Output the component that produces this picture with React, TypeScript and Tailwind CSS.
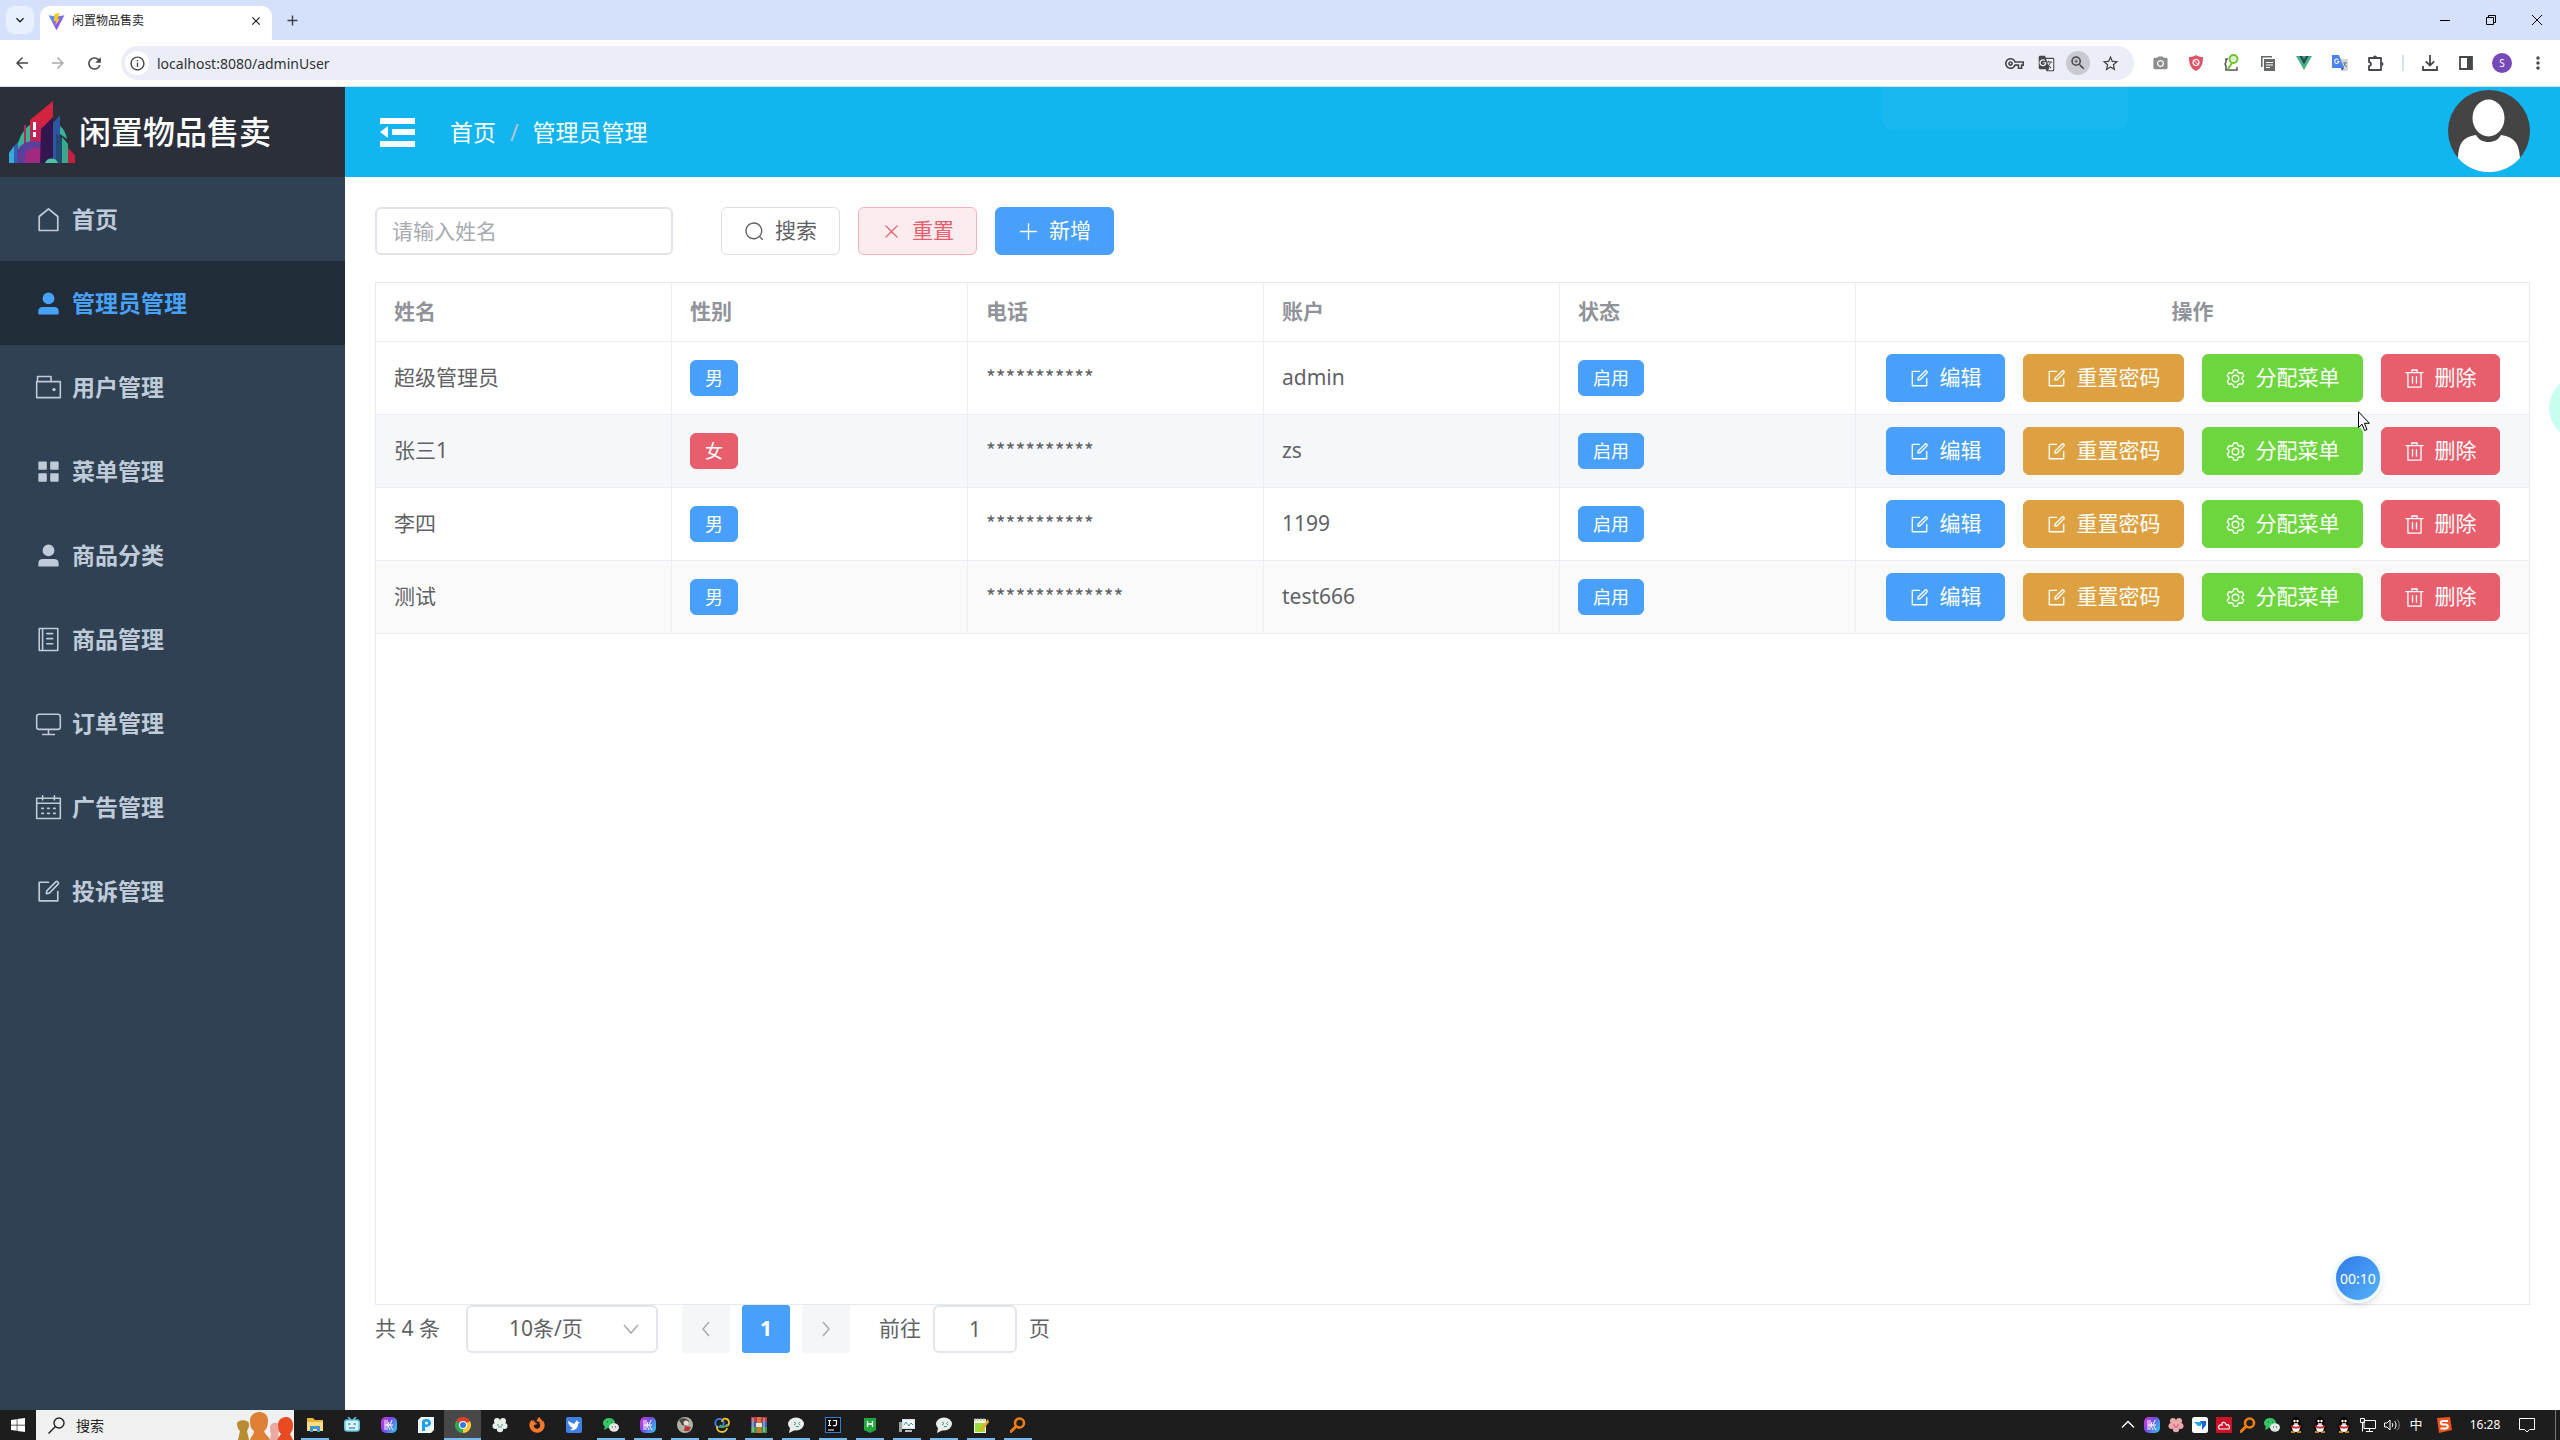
import React from "react";
import {
  MdArrowBack, MdArrowForward, MdRefresh, MdInfoOutline, MdGTranslate, MdZoomIn, MdStarBorder,
  MdPhotoCamera, MdMoreVert, MdClose, MdAdd, MdKeyboardArrowDown, MdOutlineVpnKey,
} from "react-icons/md";
import { FaFirefoxBrowser, FaWindows } from "react-icons/fa";

const P = {
  search: "m795.904 750.72 124.992 124.928a32 32 0 0 1-45.248 45.248L750.656 795.904a416 416 0 1 1 45.248-45.248zM480 832a352 352 0 1 0 0-704 352 352 0 0 0 0 704",
  close: "M764.288 214.592 512 466.88 259.712 214.592a31.936 31.936 0 0 0-45.12 45.12L466.752 512 214.528 764.224a31.936 31.936 0 1 0 45.12 45.184L512 557.184l252.288 252.288a31.936 31.936 0 0 0 45.12-45.12L557.12 512.064l252.288-252.352a31.936 31.936 0 1 0-45.12-45.184z",
  plus: "M480 480V128a32 32 0 0 1 64 0v352h352a32 32 0 1 1 0 64H544v352a32 32 0 1 1-64 0V544H128a32 32 0 0 1 0-64z",
  edit: "M832 512a32 32 0 1 1 64 0v352a32 32 0 0 1-32 32H160a32 32 0 0 1-32-32V160a32 32 0 0 1 32-32h352a32 32 0 0 1 0 64H192v640h640zm-362.048 42.24 52.8-7.552L847.104 222.4a32 32 0 1 0-45.248-45.248L477.44 501.44l-7.552 52.8zm422.4-422.4a96 96 0 0 1 0 135.808l-331.84 331.84a32 32 0 0 1-18.112 9.088L436.8 623.68a32 32 0 0 1-36.224-36.224l15.104-105.6a32 32 0 0 1 9.024-18.112l331.904-331.84a96 96 0 0 1 135.744 0z",
  trash: "M160 256H96a32 32 0 0 1 0-64h256V95.936a32 32 0 0 1 32-32h256a32 32 0 0 1 32 32V192h256a32 32 0 1 1 0 64h-64v672a32 32 0 0 1-32 32H192a32 32 0 0 1-32-32zm448-64v-64H416v64zM224 896h576V256H224zm192-128a32 32 0 0 1-32-32V416a32 32 0 0 1 64 0v320a32 32 0 0 1-32 32m192 0a32 32 0 0 1-32-32V416a32 32 0 0 1 64 0v320a32 32 0 0 1-32 32",
  user: "M288 320a224 224 0 1 0 448 0 224 224 0 1 0-448 0m544 608H160a32 32 0 0 1-32-32v-96a160 160 0 0 1 160-160h448a160 160 0 0 1 160 160v96a32 32 0 0 1-32 32z",
  house: "M192 413.952V896h640V413.952L512 147.328zM139.52 374.4l352-293.312a32 32 0 0 1 40.96 0l352 293.312A32 32 0 0 1 896 398.976V928a32 32 0 0 1-32 32H160a32 32 0 0 1-32-32V398.976a32 32 0 0 1 11.52-24.576",
  menu: "M160 448a32 32 0 0 1-32-32V160a32 32 0 0 1 32-32h256a32 32 0 0 1 32 32v256a32 32 0 0 1-32 32zm448 0a32 32 0 0 1-32-32V160a32 32 0 0 1 32-32h256a32 32 0 0 1 32 32v256a32 32 0 0 1-32 32zM160 896a32 32 0 0 1-32-32V608a32 32 0 0 1 32-32h256a32 32 0 0 1 32 32v256a32 32 0 0 1-32 32zm448 0a32 32 0 0 1-32-32V608a32 32 0 0 1 32-32h256a32 32 0 0 1 32 32v256a32 32 0 0 1-32 32z",
  setting: "M600.704 64a32 32 0 0 1 30.464 22.208l35.2 109.376c14.784 7.232 28.928 15.36 42.432 24.512l112.384-24.192a32 32 0 0 1 34.432 15.36L944.32 364.8a32 32 0 0 1-4.032 37.504l-77.12 85.12a357.12 357.12 0 0 1 0 49.024l77.12 85.248a32 32 0 0 1 4.032 37.504l-88.704 153.6a32 32 0 0 1-34.432 15.296L708.8 803.904c-13.44 9.088-27.648 17.28-42.368 24.512l-35.264 109.376A32 32 0 0 1 600.704 960H423.296a32 32 0 0 1-30.464-22.208L357.696 828.48a351.616 351.616 0 0 1-42.56-24.64l-112.32 24.256a32 32 0 0 1-34.432-15.36L79.68 659.2a32 32 0 0 1 4.032-37.504l77.12-85.248a357.12 357.12 0 0 1 0-48.896l-77.12-85.248A32 32 0 0 1 79.68 364.8l88.704-153.6a32 32 0 0 1 34.432-15.296l112.32 24.256c13.568-9.152 27.776-17.408 42.56-24.64l35.2-109.312A32 32 0 0 1 423.232 64H600.64zm-23.424 64H446.72l-36.352 113.088-24.512 11.968a294.113 294.113 0 0 0-34.816 20.096l-22.656 15.36-116.224-25.088-65.28 113.152 79.68 88.192-1.92 27.136a293.12 293.12 0 0 0 0 40.192l1.92 27.136-79.808 88.192 65.344 113.152 116.224-25.024 22.656 15.296a294.113 294.113 0 0 0 34.816 20.096l24.512 11.968L446.72 896h130.688l36.48-113.152 24.448-11.904a288.282 288.282 0 0 0 34.752-20.096l22.592-15.296 116.288 25.024 65.28-113.152-79.744-88.192 1.92-27.136a293.12 293.12 0 0 0 0-40.256l-1.92-27.136 79.808-88.128-65.344-113.152-116.288 24.96-22.592-15.232a287.616 287.616 0 0 0-34.752-20.096l-24.448-11.904L577.344 128zM512 320a192 192 0 1 1 0 384 192 192 0 0 1 0-384m0 64a128 128 0 1 0 0 256 128 128 0 0 0 0-256",
};

const LINES = {
  wallet: "M96 288V96h512v160M64 288h896v608H64zM704 592h32",
  notebook: "M160 96h704v832H160zM288 96v832M448 288h224M448 480h224M448 672h224",
  monitor: "M160 160h704a96 96 0 0 1 96 96v384a96 96 0 0 1-96 96H160a96 96 0 0 1-96-96V256a96 96 0 0 1 96-96zM512 736v192M288 928h448",
  calendar: "M64 160h896v768H64zM64 352h896M288 64v160M736 64v160M256 544h64M480 544h64M704 544h64M256 736h64M480 736h64M704 736h64",
};

function Icon({ name, className = "size-[21px]" }: { name: string; className?: string }) {
  const filled = (P as Record<string, string>)[name];
  const line = (LINES as Record<string, string>)[name];
  return (
    <svg viewBox="0 0 1024 1024" className={className + " shrink-0"} aria-hidden="true">
      {filled ? (
        <path d={filled} fill="currentColor" />
      ) : (
        <path d={line} fill="none" stroke="currentColor" strokeWidth="60" strokeLinecap="round" strokeLinejoin="round" />
      )}
      {name === "wallet" && <circle cx="720" cy="592" r="64" fill="currentColor" />}
    </svg>
  );
}

/* ---------- browser chrome ---------- */

const ViteLogo = () => (
  <svg viewBox="0 0 32 32" className="size-[17px]" aria-hidden="true">
    <defs>
      <linearGradient id="vp" x1="0" y1="0" x2="1" y2="1">
        <stop offset="0" stopColor="#41a6ff" />
        <stop offset="1" stopColor="#b92de0" />
      </linearGradient>
    </defs>
    <path d="M31 4 17 30.500a1 1 0 0 1-2 0L1 4l15 2.500z" fill="url(#vp)" />
    <path d="M22 0 12 2l-1 13h4l-1 8 8-12h-4z" fill="#ffc81f" />
  </svg>
);

function Cell({ children, label, w = "w-9" }: { children: React.ReactNode; label: string; w?: string }) {
  return (
    <button type="button" aria-label={label} className={"flex h-8 shrink-0 items-center justify-center " + w}>
      {children}
    </button>
  );
}

function TabStrip() {
  return (
    <div className="flex h-10 items-end bg-[#d5e1fb]">
      <button type="button" aria-label="tabs" className="mb-1.5 ml-1.5 flex size-7 items-center justify-center rounded-[9px] bg-[#e9f0fd] text-[#1f1f1f]">
        <MdKeyboardArrowDown size={16} />
      </button>
      <div className="ml-1.5 flex h-[34px] w-[232px] items-center rounded-t-[10px] bg-white pr-2 pb-1 pl-2">
        <ViteLogo />
        <span className="ml-[7px] flex-1 text-[12px] text-[#1f1f1f]">闲置物品售卖</span>
        <button type="button" aria-label="close tab" className="flex size-4 items-center justify-center text-[#1f1f1f]">
          <MdClose size={14} />
        </button>
      </div>
      <button type="button" aria-label="new tab" className="mb-2.5 ml-2.5 flex size-5 items-center justify-center text-[#3c4043]">
        <MdAdd size={17} />
      </button>
      <div className="ml-auto flex h-10 items-center text-black">
        <button type="button" aria-label="minimize" className="flex h-10 w-[46px] items-center justify-center">
          <svg viewBox="0 0 12 12" className="size-3"><path d="M1 6.500h10" stroke="currentColor" /></svg>
        </button>
        <button type="button" aria-label="restore" className="flex h-10 w-[46px] items-center justify-center">
          <svg viewBox="0 0 12 12" className="size-3" fill="none"><path d="M1.500 3.500h7v7h-7zM3.500 3.500v-2h7v7h-2" stroke="currentColor" /></svg>
        </button>
        <button type="button" aria-label="close" className="flex h-10 w-[46px] items-center justify-center">
          <svg viewBox="0 0 12 12" className="size-3"><path d="m1 1 10 10M11 1 1 11" stroke="currentColor" /></svg>
        </button>
      </div>
    </div>
  );
}

function AddressBar() {
  return (
    <div className="flex h-[47px] items-center border-b border-[#d3e0ea] bg-white pr-1 pl-1 text-[#46484b]">
      <Cell label="back"><MdArrowBack size={18} /></Cell>
      <Cell label="forward"><MdArrowForward size={18} className="text-[#a9abae]" /></Cell>
      <Cell label="reload"><MdRefresh size={19} /></Cell>
      <div className="mr-2 ml-[9px] flex h-[34px] flex-1 items-center rounded-full bg-[#ebeef7] pr-2 pl-1">
        <span className="flex size-6 items-center justify-center rounded-full bg-white"><MdInfoOutline size={17} /></span>
        <input aria-label="address" defaultValue="localhost:8080/adminUser" className="ml-2 min-w-0 flex-1 bg-transparent text-[14px] text-[#303236] outline-none" />
        <Cell label="password" w="w-8"><MdOutlineVpnKey size={19} /></Cell>
        <Cell label="translate" w="w-8"><MdGTranslate size={17} /></Cell>
        <Cell label="zoom" w="w-8">
          <span className="flex size-6 items-center justify-center rounded-full bg-[#c7cad1]"><MdZoomIn size={18} /></span>
        </Cell>
        <Cell label="bookmark" w="w-8"><MdStarBorder size={19} /></Cell>
      </div>
      <Cell label="screenshot"><MdPhotoCamera size={17} className="text-[#8b8d90]" /></Cell>
      <Cell label="shield">
        <svg viewBox="0 0 16 16" className="size-4">
          <path d="M8 0c2 1.500 4.500 2 7 2 0 6-1 11-7 14C2 13 1 8 1 2c2.500 0 5-.5 7-2" fill="#dc5467" />
          <circle cx="8" cy="7.500" r="3" fill="none" stroke="#fff" strokeWidth="1.200" /><path d="m6 5.500 4 4" stroke="#fff" />
        </svg>
      </Cell>
      <Cell label="inspector">
        <svg viewBox="0 0 16 18" className="h-[18px] w-4" fill="none">
          <path d="M4 5H2v3L1 10l1 2v4h11v-3" stroke="#555" strokeWidth="1.500" />
          <circle cx="9.500" cy="5" r="4" fill="#dcf3cc" stroke="#6fc32f" strokeWidth="1.800" /><path d="m8 9-4 6" stroke="#6fc32f" strokeWidth="2" />
        </svg>
      </Cell>
      <Cell label="copy">
        <svg viewBox="0 0 16 16" className="size-4" fill="none">
          <path d="M1.800 12V1.800H12" stroke="#66686b" strokeWidth="1.600" />
          <path d="M4 4h11v12H4z" fill="#66686b" />
          <path d="M6 7.500h7M6 10h7M6 12.500h4" stroke="#fff" strokeWidth="1.200" />
        </svg>
      </Cell>
      <Cell label="vue">
        <svg viewBox="0 0 16 14" className="h-3.5 w-4"><path d="M0 0h16L8 14z" fill="#41b883" /><path d="M3.200 0h3L8 3l1.800-3h3L8 8.400z" fill="#34495e" /></svg>
      </Cell>
      <Cell label="google translate">
        <svg viewBox="0 0 16 16" className="size-4">
          <path d="M7 4h9v12h-5z" fill="#d5d7da" /><path d="M0 0h7l5 13H0z" fill="#4a83ee" /><path d="M9 13h3l-2 3z" fill="#2a56c0" />
          <path d="M6.500 4.800A2.200 2.200 0 1 0 7 6.500H5" fill="none" stroke="#fff" strokeWidth="1.100" /><path d="M11 8h4M13 7v1c0 2-1 3-2 4M12 9l3 3" fill="none" stroke="#63686e" strokeWidth=".8" />
        </svg>
      </Cell>
      <Cell label="extensions">
        <svg viewBox="0 0 18 18" className="size-[18px]" fill="none" stroke="currentColor" strokeWidth="1.800" strokeLinejoin="round">
          <path d="M2 4h12v12H2v-4a2 2 0 0 0 0-4z" /><path d="M6 3.500a2 2 0 0 1 4 0zM14.500 8a2 2 0 0 1 0 4z" fill="currentColor" stroke="none" />
        </svg>
      </Cell>
      <span className="mx-2 h-4 w-0.5 bg-[#d3e1fb]" />
      <Cell label="downloads">
        <svg viewBox="0 0 16 16" className="size-4" fill="none" stroke="currentColor" strokeWidth="1.800"><path d="M8 0v10M3.800 6.300 8 10.500l4.200-4.200M1 11v4h14v-4" /></svg>
      </Cell>
      <Cell label="side panel">
        <svg viewBox="0 0 16 16" className="size-4"><path d="M2 2h12v12H2z" fill="none" stroke="currentColor" strokeWidth="1.800" /><path d="M9 2h5v12H9z" fill="currentColor" /></svg>
      </Cell>
      <Cell label="profile"><span className="flex size-5 items-center justify-center rounded-full bg-[#7549b8] text-[10px] text-white">S</span></Cell>
      <Cell label="more"><MdMoreVert size={20} /></Cell>
    </div>
  );
}

/* ---------- application ---------- */

const CityLogo = () => (
  <svg viewBox="0 0 67 64" className="h-16 w-[67px] shrink-0" aria-hidden="true">
    <path d="M1 53 6 46v17H1z" fill="#3aa9dc" /><path d="m6 46 6-6v23H6z" fill="#2d62b4" />
    <path d="M10 44c2-9 7-16 13-20v39H10z" fill="#37b597" />
    <path d="M16 25h2v38h-2z" fill="#b5285c" />
    <path d="M22 20 45 1v32L22 50z" fill="#d4233f" /><path d="M22 30 34 20v30H22z" fill="#c52356" />
    <path d="M9 63V51c4-8 14-13 25-8v20z" fill="#5c3f9b" />
    <path d="M17 63v-8c3-6 9-8 17-7v15z" fill="#a12a80" />
    <path d="m33 29 12-12v46H32z" fill="#33154f" />
    <path d="m45 23 7-8v48h-7z" fill="#2d56a4" />
    <path d="M52 26c4 3 6 8 7 13l-7-5z" fill="#37b597" />
    <path d="m48 33 12 11v19H48z" fill="#214a70" /><path d="m54 37 6 7v19h-6z" fill="#38a98e" />
    <path d="m60 48 7 7v8h-7z" fill="#c11f45" />
    <path d="M37 63a7 7 0 0 1 13 0z" fill="#48c4a0" />
    <path d="M25 22h3v8h-3zM25 32h3v5h-3z" fill="#fff" />
  </svg>
);

const MENU = [
  ["house", "首页"], ["user", "管理员管理"], ["wallet", "用户管理"], ["menu", "菜单管理"], ["user", "商品分类"],
  ["notebook", "商品管理"], ["monitor", "订单管理"], ["calendar", "广告管理"], ["edit", "投诉管理"],
];

function Sidebar() {
  return (
    <aside className="w-[345px] shrink-0 bg-[#304153]">
      <div className="flex h-[90px] items-center bg-[#2b2f3a] pl-2">
        <CityLogo />
        <span className="ml-1 text-[32px] font-medium text-white">闲置物品售卖</span>
      </div>
      <nav>
        {MENU.map(([icon, label], i) => (
          <a
            key={label}
            href={"#" + i}
            className={"flex h-[84px] items-center gap-[10px] pl-[35px] text-[23px] font-bold " + (i === 1 ? "bg-[#212d39] text-[#48a2fc]" : "text-[#bfcbd9]")}
          >
            <Icon name={icon} className="size-[27px]" />
            {label}
          </a>
        ))}
      </nav>
    </aside>
  );
}

function TopBar() {
  return (
    <header className="relative flex h-[90px] items-center bg-[#11b5f0] pr-[30px] pl-[35px] text-[23px] text-white">
      <button type="button" aria-label="collapse menu">
        <svg viewBox="0 0 35 29" className="h-[29px] w-[35px]" fill="currentColor"><path d="M0 0h35v6H0zM12 11h23v6H12zM0 23h35v6H0zM0 14l8-6v12z" /></svg>
      </button>
      <nav className="ml-[35px] flex gap-[14px]">
        <a href="#home">首页</a>
        <span className="text-[#b9c2cc]">/</span>
        <span>管理员管理</span>
      </nav>
      <div className="absolute top-0 right-[432px] h-[43px] w-[246px] rounded-b-xl bg-[#19b8f1]" />
      <svg viewBox="0 0 82 82" className="mb-0.5 ml-auto size-[82px]" role="img" aria-label="avatar">
        <circle cx="41" cy="41" r="41" fill="#444" />
        <ellipse cx="40.500" cy="28" rx="16" ry="18.500" fill="#fff" />
        <path d="M10 68c1-14 4-21 18-23 3 5 7 7 12.500 7S50 50 53 45c14 2 18 9 19 23a41 41 0 0 1-62 0" fill="#fff" />
      </svg>
    </header>
  );
}

const BTN = "flex h-12 items-center justify-center gap-[10px] rounded-md border px-[22px] ";
const TONE: Record<string, string> = {
  plain: "border-[#dcdfe6] bg-white text-[#606266]",
  dangerPlain: "border-[#f3b3ba] bg-[#fcecee] text-[#e75f6f]",
  primary: "border-[#48a0fa] bg-[#48a0fa] text-white",
  warning: "border-[#dea141] bg-[#dea141] text-white",
  success: "border-[#6dd63e] bg-[#6dd63e] text-white",
  danger: "border-[#e85e6c] bg-[#e85e6c] text-white",
};

function Btn({ icon, tone, children }: { icon: string; tone: string; children: React.ReactNode }) {
  return (
    <button type="button" className={BTN + TONE[tone]}>
      <Icon name={icon} />
      <span>{children}</span>
    </button>
  );
}

const Tag = ({ tone, children }: { tone: string; children: React.ReactNode }) => (
  <span className={"inline-flex h-9 items-center rounded-md border px-[14px] align-middle text-[18px] " + TONE[tone]}>{children}</span>
);

const ROWS = [
  { name: "超级管理员", sex: "男", phone: "***********", account: "admin", bg: "bg-white" },
  { name: "张三1", sex: "女", phone: "***********", account: "zs", bg: "bg-[#f5f7fa]" },
  { name: "李四", sex: "男", phone: "***********", account: "1199", bg: "bg-white" },
  { name: "测试", sex: "男", phone: "**************", account: "test666", bg: "bg-[#fafafa]" },
];

function UserTable() {
  const cell = "border-b border-[#ebeef5] px-[18px] ";
  return (
    <div className="mt-[27px] flex-1 border border-[#e6e9f0]">
      <table className="w-full table-fixed border-separate border-spacing-0">
        <thead>
          <tr className="text-left text-[#909399]">
            {["姓名", "性别", "电话", "账户", "状态"].map((h) => (
              <th key={h} className={cell + "h-[59px] border-r font-bold"}>{h}</th>
            ))}
            <th className={cell + "h-[59px] w-[673px] text-center font-bold"}>操作</th>
          </tr>
        </thead>
        <tbody>
          {ROWS.map((r) => (
            <tr key={r.name} className={r.bg}>
              <td className={cell + "h-[73px] border-r"}>{r.name}</td>
              <td className={cell + "border-r"}><Tag tone={r.sex === "男" ? "primary" : "danger"}>{r.sex}</Tag></td>
              <td className={cell + "border-r font-['Noto_Sans_CJK_SC',sans-serif]"}>{r.phone}</td>
              <td className={cell + "border-r"}>{r.account}</td>
              <td className={cell + "border-r"}><Tag tone="primary">启用</Tag></td>
              <td className={cell}>
                <div className="flex justify-center gap-[18px]">
                  <Btn icon="edit" tone="primary">编辑</Btn>
                  <Btn icon="edit" tone="warning">重置密码</Btn>
                  <Btn icon="setting" tone="success">分配菜单</Btn>
                  <Btn icon="trash" tone="danger">删除</Btn>
                </div>
              </td>
            </tr>
          ))}
        </tbody>
      </table>
    </div>
  );
}

const Chevron = ({ d }: { d: string }) => (
  <svg viewBox="0 0 18 18" className="size-[18px]" fill="none" stroke="#a8abb2" strokeWidth="1.500"><path d={d} /></svg>
);

function Pagination() {
  return (
    <div className="flex h-12 items-center">
      <span>共 4 条</span>
      <div className="relative ml-[26px] h-12 w-[192px]">
        <select aria-label="page size" className="size-full appearance-none rounded-md border-2 border-[#e2e5eb] bg-white pr-8 text-center [text-align-last:center]">
          <option>10条/页</option>
        </select>
        <span className="pointer-events-none absolute top-[15px] right-[18px]"><Chevron d="m2 5 7 8 7-8" /></span>
      </div>
      <div className="ml-6 flex gap-3">
        <button type="button" aria-label="previous page" className="flex size-12 items-center justify-center rounded-[3px] bg-[#f4f6f8]"><Chevron d="m12 2-6 7 6 7" /></button>
        <button type="button" className="size-12 rounded-[3px] bg-[#48a0fa] font-bold text-white">1</button>
        <button type="button" aria-label="next page" className="flex size-12 items-center justify-center rounded-[3px] bg-[#f4f6f8]"><Chevron d="m6 2 6 7-6 7" /></button>
      </div>
      <label htmlFor="jump" className="ml-[29px]">前往</label>
      <input id="jump" defaultValue="1" className="mx-3 h-12 w-[84px] rounded-md border-2 border-[#e2e5eb] text-center outline-none" />
      <span>页</span>
    </div>
  );
}

/* ---------- taskbar ---------- */

const Glyph = ({ children }: { children: React.ReactNode }) => <svg viewBox="0 0 16 16" className="size-4" aria-hidden="true">{children}</svg>;

const Koala = () => (
  <Glyph>
    <defs><linearGradient id="kg" x1="0" y1="0" x2="1" y2="0.600"><stop offset="0" stopColor="#e035d8" /><stop offset=".5" stopColor="#7a48e8" /><stop offset="1" stopColor="#35b4f0" /></linearGradient></defs>
    <rect width="16" height="16" rx="5" fill="url(#kg)" />
    <path d="M4 3v10M6 3v10M8 5l-1 3 2 5M11 3 9 8l3 5M4 8h8" stroke="#fff" fill="none" />
  </Glyph>
);
const Folder = () => (
  <Glyph><path d="M0 1h6l2 2h8v11H0z" fill="#e9b63c" /><path d="M0 5h16v9H0z" fill="#fbdc82" /><path d="M3 15V9h10v6h-3v-3H6v3z" fill="#3c97d4" /></Glyph>
);
const Bili = () => (
  <Glyph><path d="m4 0 3 3M12 0 9 3" stroke="#5cc3e0" strokeWidth="1.500" /><rect x=".8" y="3" width="14.400" height="11" rx="2.500" fill="#d9f5fb" stroke="#5cc3e0" strokeWidth="1.600" /><path d="M4 7h2.500M9.500 7H12M5 11h6" stroke="#4699b8" strokeWidth="1.400" /></Glyph>
);
const PApp = () => (
  <Glyph><path d="M3 0h13v13l-3 3H0V3z" fill="#eef7fc" /><path d="M4 14V5c0-4 9-4 9 1 0 4-5 4-6 4v4z" fill="#1ea0e6" /><circle cx="8.500" cy="6" r="1.500" fill="#fff" /></Glyph>
);
const Chrome = () => (
  <Glyph>
    <path d="M8 8 1.070 4A8 8 0 0 1 14.930 4z" fill="#e33b2e" /><path d="M8 8V16A8 8 0 0 1 1.070 4z" fill="#2da94f" /><path d="M8 8 14.930 4A8 8 0 0 1 8 16z" fill="#fcc934" />
    <circle cx="8" cy="8" r="4" fill="#fff" /><circle cx="8" cy="8" r="3" fill="#3b78e7" />
  </Glyph>
);
const Flower = ({ c = "#e9efe9", k = "#4aa583" }: { c?: string; k?: string }) => (
  <Glyph><g fill={c}><circle cx="5" cy="4" r="3" /><circle cx="11" cy="4" r="3" /><circle cx="3.500" cy="9" r="3" /><circle cx="12.500" cy="9" r="3" /><circle cx="8" cy="12" r="3.200" /><circle cx="8" cy="8" r="4" /></g><path d="M5 8h2M9 8h2M6 10h4" stroke={k} /></Glyph>
);
const Bird = () => (
  <Glyph><rect width="16" height="16" rx="2" fill="#3f7fe8" /><path d="m2 4 6 3 3-4 1 2h2l-2 2c0 5-4 7-8 6l3-2c-3-1-5-4-5-7" fill="#fff" /></Glyph>
);
const WeChat = () => (
  <Glyph><ellipse cx="6" cy="6" rx="6" ry="5" fill="#35c566" /><path d="m2 9-1 4 4-2z" fill="#35c566" /><ellipse cx="11" cy="10.500" rx="5" ry="4.200" fill="#e4e8e4" /><path d="M4 5h1M8 5h1M9 10h1M12 10h1" stroke="#1c4a2c" /></Glyph>
);
const Portrait = () => (
  <Glyph><circle cx="8" cy="8" r="8" fill="#aeb3a4" /><path d="M2 3c4-3 8-2 10 1L9 9 5 8z" fill="#4a4742" /><circle cx="9" cy="6" r="2.500" fill="#efdcd2" /><path d="m8 9 6 1-2 4H7z" fill="#b5323c" /></Glyph>
);
const Navicat = () => (
  <Glyph><g fill="none" strokeWidth="1.800"><circle cx="5.500" cy="6" r="4.200" stroke="#3f83e6" /><path d="M8 5c0-5 7-4 7 1 0 2-2 3-4 3" stroke="#f2bf2b" /><path d="M3 9c-1 7 9 8 10 2" stroke="#e8cb35" /><path d="M6 8c2 4 7 1 7-1" stroke="#4aaf6e" /></g></Glyph>
);
const Rar = () => (
  <Glyph><path d="M0 0h16v5H0z" fill="#b8395b" /><path d="M0 5h16v5H0z" fill="#3d62b8" /><path d="M0 10h16v6H0z" fill="#3a9a51" /><path d="M6 0h4v16H6z" fill="#d8762c" /><path d="M5 6h6v4H5z" fill="#f1e4cd" /><path d="M2 1v14M13 1v14" stroke="#cfd0a8" /></Glyph>
);
const Bubble = () => (
  <Glyph><ellipse cx="8" cy="7" rx="8" ry="6.500" fill="#e9ece9" /><path d="m2 11-1 5 6-3z" fill="#e9ece9" /><path d="m6 5 2 1.500L6 8M12 5l-1.500 1.500L12 8M8 9.500h3" stroke="#31a37c" fill="none" /></Glyph>
);
const Idea = () => (
  <Glyph><rect x=".5" y=".5" width="15" height="15" fill="#0b0b0e" stroke="#2e80cf" /><path d="M3 3.500h3M4.500 3.500v5M3 8.500h3M8 3.500h3.500v4c0 1-2 1.500-3.500 1M3 13h6" stroke="#fff" fill="none" strokeWidth="1.200" /></Glyph>
);
const HBuilder = () => (
  <Glyph><path d="M2 1h12v12l-6 3-6-3z" fill="#21a83d" /><path d="M5.500 4v6M10.500 4v6M5.500 7h5" stroke="#fff" strokeWidth="1.300" /></Glyph>
);
const Perf = () => (
  <Glyph><path d="M0 5h3v10H0z" fill="#9ea7a0" /><rect x="3" y="2" width="13" height="10" fill="#dfe5e6" /><rect x="4.500" y="3.500" width="10" height="7" fill="#fff" /><path d="m5 8 2-3 3 4 2-3 2 2" fill="none" stroke="#2392bf" /><path d="M6 13h7v2H6z" fill="#b8bebf" /></Glyph>
);
const Notepad = () => (
  <Glyph><path d="M1 2h12v14H1z" fill="#f2f4e4" /><path d="M2 6h10v9H2z" fill="#9ddb3c" /><path d="M2 1v3M5 1v3M8 1v3M11 1v3" stroke="#999" /><path d="m15 2-7 9-1 3 3-1 6-8z" fill="#eda62c" /></Glyph>
);
const OrangeSearch = () => (
  <Glyph><circle cx="9.500" cy="6" r="4.500" fill="none" stroke="#ee7d14" strokeWidth="2.600" /><path d="m6 9.500-5 5" stroke="#ee7d14" strokeWidth="3" strokeLinecap="round" /></Glyph>
);
const Penguin = () => (
  <Glyph><ellipse cx="8" cy="10" rx="6.500" ry="5" fill="#050505" /><ellipse cx="8" cy="5" rx="4.500" ry="5" fill="#050505" /><ellipse cx="8" cy="11" rx="3.800" ry="4" fill="#fff" /><circle cx="6.500" cy="4" r="1.200" fill="#fff" /><circle cx="9.500" cy="4" r="1.200" fill="#fff" /><path d="M3 8c3 2 7 2 10 0v2c-3 2-7 2-10 0z" fill="#d92b33" /><path d="M3 15h4M9 15h4" stroke="#eda52c" strokeWidth="1.500" /><path d="M6 6.500h4" stroke="#eda52c" /></Glyph>
);
const Meet = () => (
  <Glyph><rect width="16" height="16" rx="2.500" fill="#fff" /><path d="M2 5h7v4H6z" fill="#2aa6f2" /><path d="M8 4h6v4l-4 5V8z" fill="#1467d8" /></Glyph>
);
const RedCloud = () => (
  <Glyph><rect width="16" height="16" fill="#cb1228" /><path d="M3 12h10c1.500-3-1-5-2.500-4C9 4 5 5 6 8c-3-1-4 2-3 4z" fill="none" stroke="#fff" strokeWidth="1.200" /></Glyph>
);
const Sogou = () => (
  <svg viewBox="0 0 16 16" className="size-4"><path d="m1 1 13-1 2 13-13 3z" fill="#f0511d" /><path d="M12 4H7C4 4 4 7.500 7 7.500h2.500c3 0 3 4 0 4H4.500" fill="none" stroke="#fff" strokeWidth="2" /></svg>
);

const APPS: [string, React.ReactNode, number][] = [
  ["files", <Folder />, 1], ["bilibili", <Bili />, 0], ["koala", <Koala />, 0], ["pixpin", <PApp />, 0], ["chrome", <Chrome />, 2],
  ["flower", <Flower />, 0], ["firefox", <FaFirefoxBrowser size={16} className="text-[#f5792a]" />, 0], ["bird", <Bird />, 0],
  ["wechat", <WeChat />, 1], ["koala window", <Koala />, 1], ["portrait", <Portrait />, 1], ["database", <Navicat />, 1],
  ["archive", <Rar />, 1], ["chat", <Bubble />, 1], ["idea", <Idea />, 1], ["hbuilder", <HBuilder />, 1], ["monitor", <Perf />, 1],
  ["chat tools", <Bubble />, 1], ["notepad", <Notepad />, 1], ["everything", <OrangeSearch />, 1],
];

const TRAY: React.ReactNode[] = [
  <Glyph><path d="m2 10.500 6-6 6 6" stroke="#fff" strokeWidth="1.300" fill="none" /></Glyph>,
  <Koala />, <Flower c="#eda9ab" k="#b9567a" />, <Meet />, <RedCloud />, <OrangeSearch />, <WeChat />, <Penguin />, <Penguin />, <Penguin />,
  <Glyph><path d="M4 3.500h11.500v8H4zM9.500 11.500v3M6 14.500h7M.5 1.500h4v4h-4zM2.500 5.500v9" stroke="#fff" fill="none" /></Glyph>,
  <Glyph><path d="M.5 6v4h2.500l3 3V3L3 6zM8 6c1 1 1 3 0 4M10.500 4c2 2 2 6 0 8" stroke="#fff" fill="none" /><path d="M13 2.500c3 3 3 8 0 11" stroke="#888" fill="none" /></Glyph>,
  <span className="text-[13px]">中</span>,
];

function Taskbar() {
  return (
    <footer className="flex h-[30px] items-center bg-[#1d1d1d] text-white">
      <button type="button" aria-label="start" className="flex w-9 justify-center"><FaWindows size={16} /></button>
      <div className="flex h-[30px] w-[258px] items-center bg-[#f0f0f0] pl-3 text-[#222]">
        <svg viewBox="0 0 17 17" className="size-[17px]" fill="none" stroke="#222" strokeWidth="1.400"><circle cx="11" cy="6" r="5" /><path d="m7.500 9.500-7 7" /></svg>
        <input aria-label="搜索" placeholder="搜索" className="ml-[11px] w-[120px] bg-transparent text-[14px] outline-none placeholder:text-[#222]" />
        <svg viewBox="0 0 58 28" className="ml-auto h-7 w-[58px] self-end" aria-hidden="true">
          <path d="M1 12c0-5 12-5 12 0 0 4-1 5-2 7l2 9H2l2-9C2 17 1 15 1 12" fill="#b98c31" />
          <path d="M34 15c1-6 10-5 10 0 0 4-1 5-2 7l2 6H34l1-6c-1-2-1-4-1-7" fill="#eba9a3" />
          <path d="M14 10C13-3 32-3 32 8c0 6-1 9-4 11 1 4 5 5 6 9H14c1-4 4-5 4-9-3-2-4-5-4-9" fill="#df8034" />
          <path d="M42 13c0-10 15-11 15 0 0 5-1 6-3 9l3 6H41l4-6c-2-2-3-5-3-9" fill="#e84a22" />
        </svg>
      </div>
      <div className="ml-0.5 flex h-full">
        {APPS.map(([label, icon, state]) => (
          <button
            key={label}
            type="button"
            aria-label={label}
            className={"flex h-full w-[37px] items-center justify-center " + (state === 2 ? "border-b-2 border-[#76b9ed] bg-[#484848] pt-0.5" : "")}
          >
            <span className={"flex h-full w-7 items-center justify-center " + (state === 1 ? "border-b-2 border-[#76b9ed] pt-0.5" : "")}>{icon}</span>
          </button>
        ))}
      </div>
      <div className="ml-auto flex h-full items-center">
        {TRAY.map((t, i) => (
          <span key={i} className="flex w-6 justify-center">{t}</span>
        ))}
        <span className="flex w-8 justify-center"><Sogou /></span>
        <span className="w-[50px] text-center text-[12px]">16:28</span>
        <span className="flex w-[34px] justify-center"><Glyph><path d="M.5 1.500h15v11h-5l-2.500 2.500L5.500 12.500h-5z" stroke="#fff" fill="none" /></Glyph></span>
        <span className="mr-1 ml-[11px] h-full w-px bg-[#777]" />
      </div>
    </footer>
  );
}

export default function App() {
  return (
    <div className="relative flex min-h-screen flex-col overflow-hidden bg-white font-['Noto_Sans','Noto_Sans_CJK_SC',sans-serif] text-[21px] text-[#606266]">
      <TabStrip />
      <AddressBar />
      <div className="flex flex-1">
        <Sidebar />
        <div className="flex min-w-0 flex-1 flex-col">
          <TopBar />
          <main className="flex flex-1 flex-col px-[30px] pt-[30px] pb-[57px]">
            <div className="flex items-center gap-[18px]">
              <input aria-label="姓名" placeholder="请输入姓名" className="mr-[30px] h-12 w-[298px] rounded-md border-2 border-[#e0e3e9] px-[15px] outline-none placeholder:text-[#a8abb2]" />
              <Btn icon="search" tone="plain">搜索</Btn>
              <Btn icon="close" tone="dangerPlain">重置</Btn>
              <Btn icon="plus" tone="primary">新增</Btn>
            </div>
            <UserTable />
            <Pagination />
          </main>
        </div>
      </div>
      <Taskbar />

      <div className="absolute top-[376px] -right-[53px] size-16 rounded-full bg-[#c8fdf0]" />
      <div className="absolute right-[177px] bottom-[137px] flex size-[50px] items-center justify-center rounded-full border-[3px] border-[#edf9fd] bg-linear-to-br from-[#3478e8] to-[#55b4f8] text-[14px] text-white shadow-md">
        00:10
      </div>
      <svg viewBox="0 0 13 21" className="absolute top-[411px] right-[189px] h-[21px] w-[13px]" aria-hidden="true">
        <path d="M.5.8v15.700l3.500-3.300 2.600 6.300 2.400-1-2.600-6.200h5z" fill="#fff" stroke="#000" />
      </svg>
    </div>
  );
}
